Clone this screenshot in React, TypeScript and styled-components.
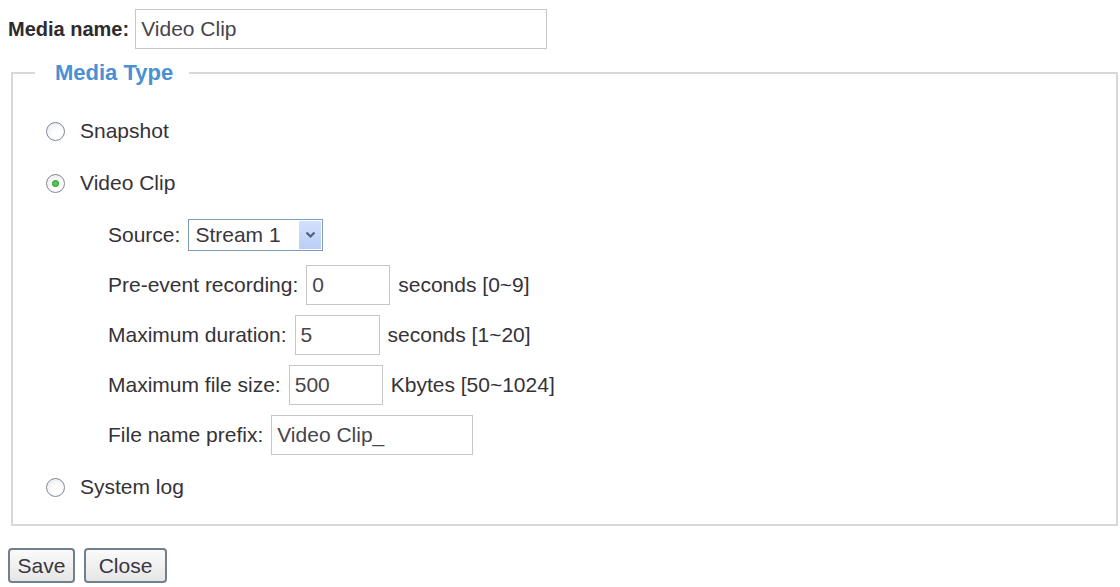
import styled, { createGlobalStyle } from "styled-components";

const GlobalStyle = createGlobalStyle`
  html, body {
    margin: 0;
    background: #fff;
  }
  body {
    font-family: "Liberation Sans", Arial, sans-serif;
    color: #353238;
  }
`;

const Page = styled.div`
  padding: 9px 2px 0 8px;
`;

const NameRow = styled.div`
  display: flex;
  align-items: center;
  gap: 6px;
  height: 40px;
`;

const NameLabel = styled.span`
  font-size: 20px;
  font-weight: bold;
  color: #2e2b30;
`;

const TextBox = styled.div<{ $w: number }>`
  box-sizing: border-box;
  width: ${(p) => p.$w}px;
  height: 40px;
  border: 1px solid #c6c6c6;
  display: flex;
  align-items: center;
  padding: 0 5px;
  font-size: 21px;
  color: #48444c;
  background: #fff;
`;

const Group = styled.fieldset`
  margin: 11px 0 0 3px;
  padding: 25px 0 17px 33px;
  border: 2px solid #d8d8d8;
  min-width: 0;
`;

const Legend = styled.legend`
  margin-left: -11px;
  padding: 0 16px 0 20px;
  font-size: 22px;
  line-height: 26px;
  font-weight: bold;
  color: #4a90d4;
`;

const Options = styled.div`
  display: flex;
  flex-direction: column;
  gap: 12px;
`;

const Row = styled.label`
  display: flex;
  align-items: center;
  height: 40px;
  font-size: 21px;
`;

const Radio = styled.span<{ $on?: boolean }>`
  position: relative;
  box-sizing: border-box;
  width: 19px;
  height: 19px;
  margin-right: 15px;
  border-radius: 50%;
  border: 1px solid #7d8a99;
  background: radial-gradient(circle at 60% 65%, #fff 30%, #e2e4ea 100%);

  &::after {
    content: "";
    display: ${(p) => (p.$on ? "block" : "none")};
    position: absolute;
    left: 50%;
    top: 50%;
    width: 7px;
    height: 7px;
    margin: -3.5px 0 0 -3.5px;
    border-radius: 50%;
    background: radial-gradient(circle, #5fcf5f 0%, #2a9a2a 100%);
  }
`;

const ClipGroup = styled.div`
  display: flex;
  flex-direction: column;
  gap: 12px;
`;

const ClipOptions = styled.div`
  display: flex;
  flex-direction: column;
  gap: 10px;
  padding-left: 62px;
`;

const Field = styled.div`
  display: flex;
  align-items: center;
  height: 40px;
  font-size: 21px;
`;

const FieldLabel = styled.span`
  margin-right: 8px;
`;

const Unit = styled.span`
  margin-left: 8px;
`;

const Select = styled.div`
  box-sizing: border-box;
  display: flex;
  align-items: stretch;
  width: 135px;
  height: 32px;
  border: 1px solid #7f9db9;
  background: #fff;
`;

const SelectValue = styled.span`
  flex: 1;
  display: flex;
  align-items: center;
  padding-left: 6px;
  font-size: 21px;
  color: #3a3640;
`;

const SelectArrow = styled.span`
  width: 22px;
  margin: 1px;
  display: flex;
  align-items: center;
  justify-content: center;
  background: linear-gradient(#d4e1fc, #b9cdf6);
`;

const Buttons = styled.div`
  display: flex;
  gap: 9px;
  margin-top: 22px;
`;

const Button = styled.button<{ $w: number }>`
  box-sizing: border-box;
  width: ${(p) => p.$w}px;
  height: 35px;
  padding: 0;
  font-family: inherit;
  font-size: 21px;
  color: #3a3640;
  border: 2px solid #71808f;
  border-radius: 4px;
  background: linear-gradient(#fafafa, #e6e6e6);
`;

const fields = [
  { label: "Pre-event recording:", value: "0", w: 84, unit: "seconds [0~9]" },
  { label: "Maximum duration:", value: "5", w: 85, unit: "seconds [1~20]" },
  { label: "Maximum file size:", value: "500", w: 94, unit: "Kbytes [50~1024]" },
  { label: "File name prefix:", value: "Video Clip_", w: 202, unit: "" },
];

export default function App() {
  return (
    <Page>
      <GlobalStyle />
      <NameRow>
        <NameLabel>Media name:</NameLabel>
        <TextBox $w={412}>Video Clip</TextBox>
      </NameRow>

      <Group>
        <Legend>Media Type</Legend>
        <Options>
          <Row>
            <Radio />
            Snapshot
          </Row>
          <ClipGroup>
            <Row>
              <Radio $on />
              Video Clip
            </Row>
            <ClipOptions>
              <Field>
                <FieldLabel>Source:</FieldLabel>
                <Select>
                  <SelectValue>Stream 1</SelectValue>
                  <SelectArrow>
                    <svg width="11" height="8" viewBox="0 0 11 8">
                      <path d="M1.5 1.5 L5.5 5.5 L9.5 1.5" fill="none" stroke="#4d6185" strokeWidth="2.2" />
                    </svg>
                  </SelectArrow>
                </Select>
              </Field>
              {fields.map((f) => (
                <Field key={f.label}>
                  <FieldLabel>{f.label}</FieldLabel>
                  <TextBox $w={f.w}>{f.value}</TextBox>
                  {f.unit && <Unit>{f.unit}</Unit>}
                </Field>
              ))}
            </ClipOptions>
          </ClipGroup>
          <Row>
            <Radio />
            System log
          </Row>
        </Options>
      </Group>

      <Buttons>
        <Button $w={67}>Save</Button>
        <Button $w={83}>Close</Button>
      </Buttons>
    </Page>
  );
}
